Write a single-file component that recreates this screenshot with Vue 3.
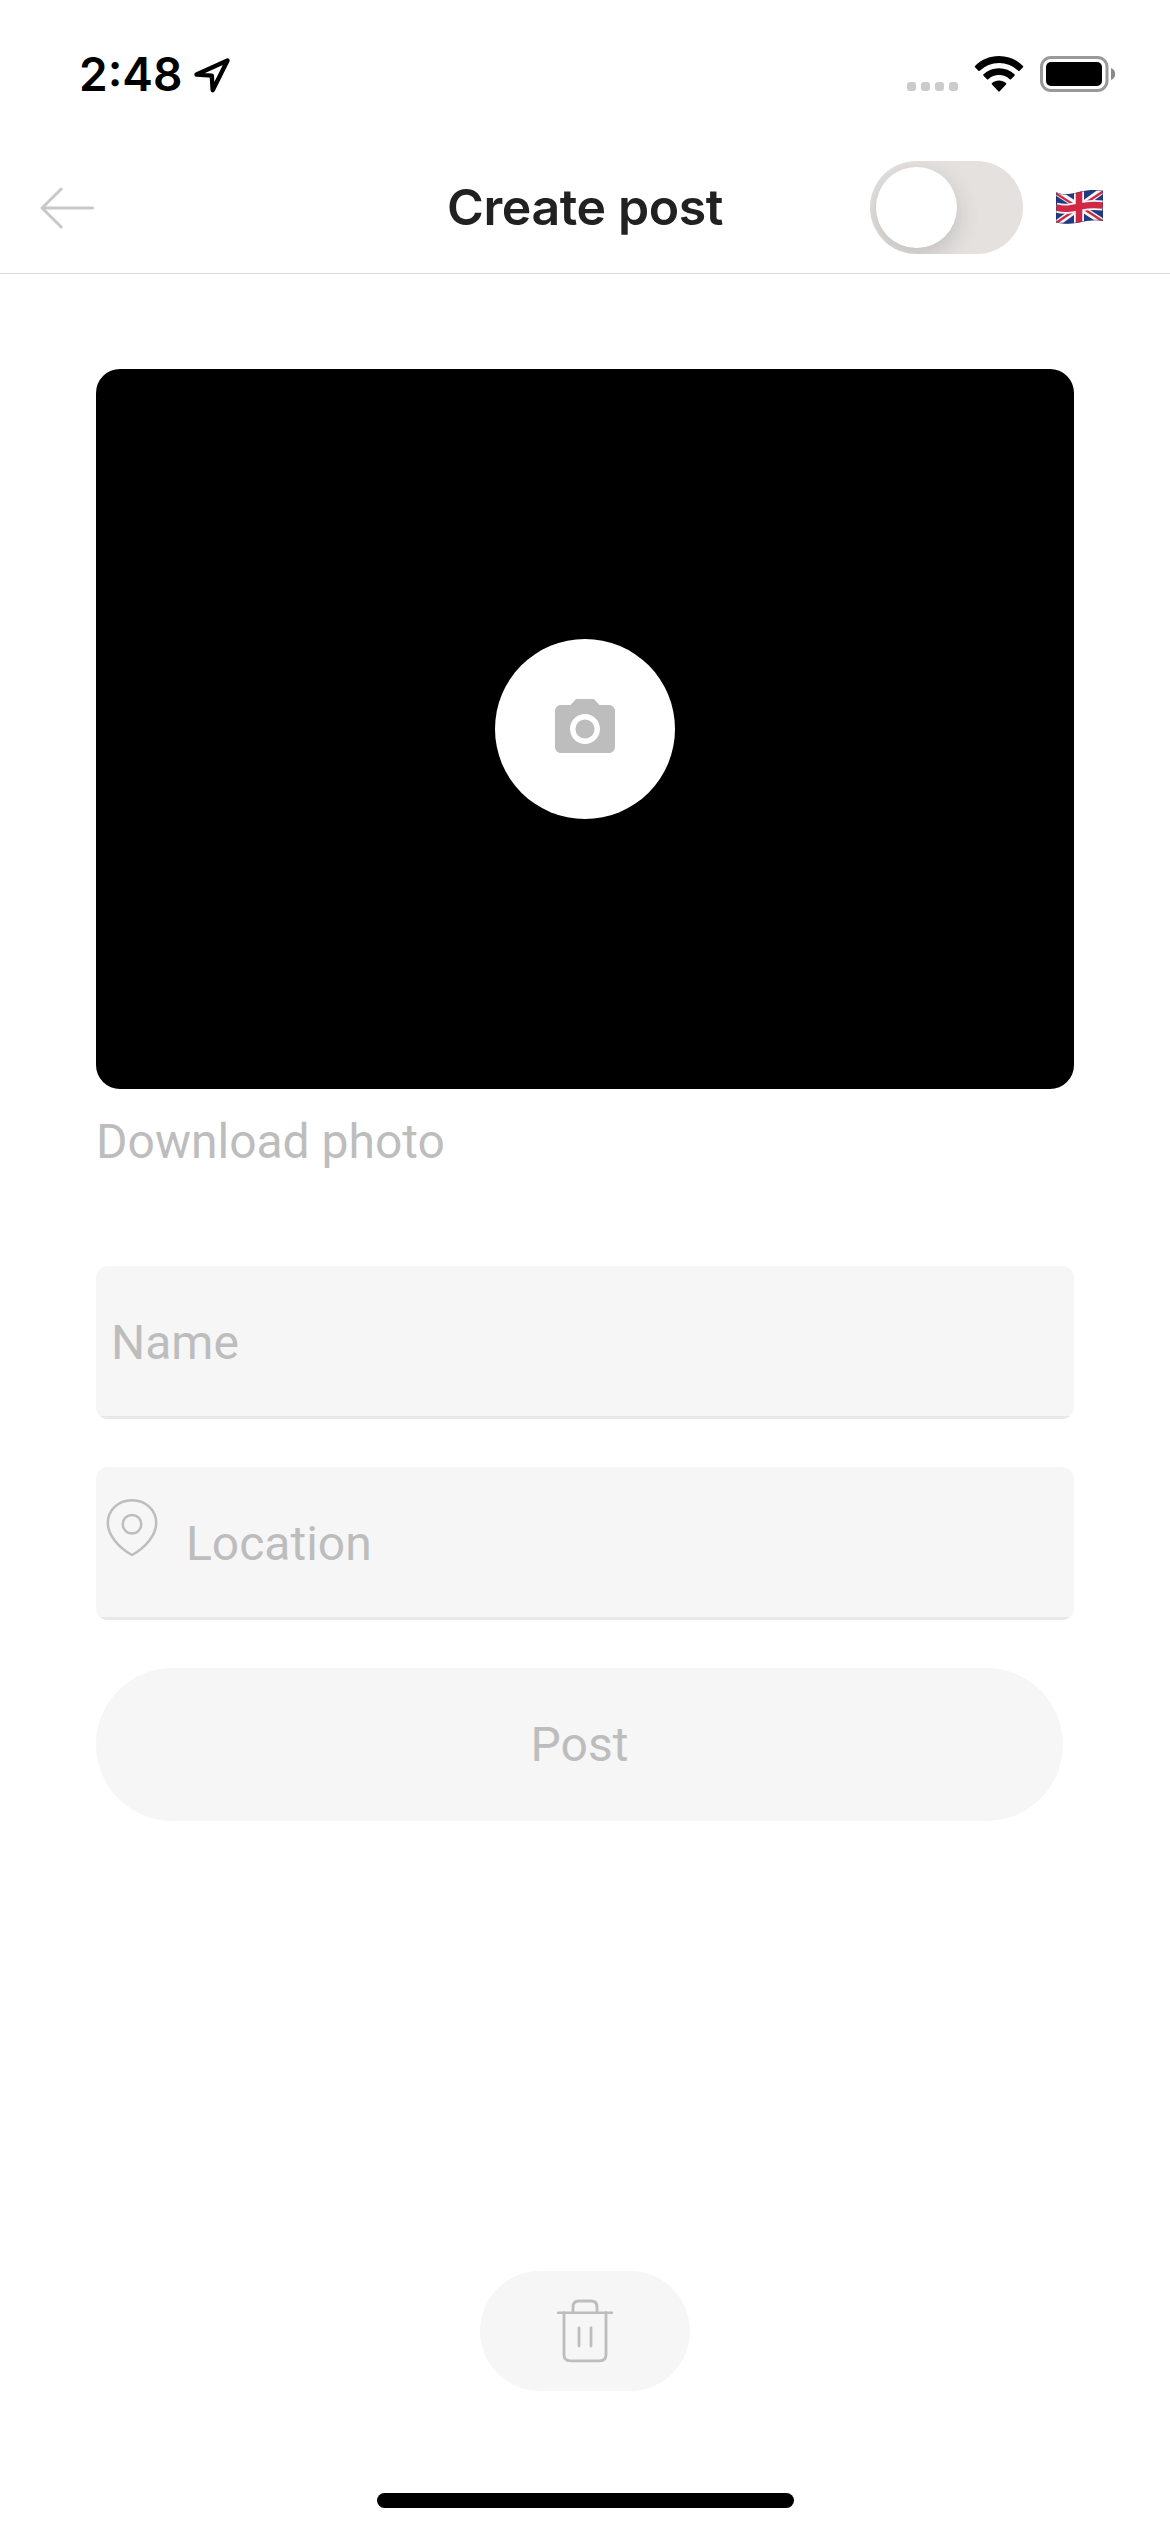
<script setup>
import { ref } from 'vue'

const english = ref(false)
const signalDots = [1, 2, 3, 4]
</script>

<template>
  <div class="screen">
    <div class="status-bar">
      <span class="time">2:48</span>
      <svg class="nav-arrow" width="40" height="38" viewBox="0 0 40 38">
        <path d="M35.500 4.500 L4.500 18.600 L19.800 19.600 L20.700 34.200 Z" fill="none" stroke="#000" stroke-width="4.400" stroke-linejoin="round" />
      </svg>
      <div class="signal">
        <i v-for="dot in signalDots" :key="dot"></i>
      </div>
      <svg class="wifi" width="50" height="38" viewBox="0 0 50 38">
        <path d="M25 1 C34.5 1 43 4.800 49 10.900 a.9.9 0 0 1 0 1.300 L45.600 15.700 a.9.9 0 0 1-1.300 0 A28 28 0 0 0 5.700 15.700 a.9.9 0 0 1-1.300 0 L1 12.200 a.9.9 0 0 1 0-1.300 C7 4.800 15.500 1 25 1Z" />
        <path d="M25 13.300 C31 13.300 36.400 15.500 40.500 19.300 a1 1 0 0 1 0 1.400 L37 24.200 a1 1 0 0 1-1.300 0 A16 16 0 0 0 14.300 24.200 a1 1 0 0 1-1.300 0 L9.500 20.700 a1 1 0 0 1 0-1.400 C13.600 15.500 19 13.300 25 13.300Z" />
        <path d="M25 25.600 C27.700 25.600 30.100 26.500 32 28.100 a1 1 0 0 1 0 1.500 L25.700 36.300 a1 1 0 0 1-1.400 0 L18 29.600 a1 1 0 0 1 0-1.500 C19.900 26.500 22.300 25.600 25 25.600Z" />
      </svg>
      <svg class="battery" width="76" height="36" viewBox="0 0 76 36">
        <rect x="1.500" y="1.500" width="65.500" height="33" rx="9.500" fill="none" stroke="#999" stroke-width="3" />
        <rect x="6" y="6" width="56" height="24" rx="5" />
        <path d="M71 12 C73.700 13 75.200 15.200 75.200 18 S73.700 23 71 24Z" fill="#8a8a8a" />
      </svg>
    </div>

    <header class="header">
      <button class="plain back" aria-label="Back">
        <svg width="54" height="42" viewBox="0 0 54 42">
          <path d="M52.500 21 H2 M21.200 2 L2 21 L21.200 40" fill="none" stroke="#c8c8c8" stroke-width="3" stroke-linecap="round" stroke-linejoin="round" />
        </svg>
      </button>
      <h1>Create post</h1>
      <button class="plain toggle" :class="{ on: english }" aria-label="Language" @click="english = !english">
        <span class="knob"></span>
      </button>
      <svg class="flag" width="47" height="34" viewBox="0 0 47 34">
        <defs>
          <clipPath id="wave">
            <path d="M0 2 C8 6 15 4 24 1.800 C33 -.4 40 -.2 47 .5 V31 C39 29.500 32 30.500 24 32.300 C15 34.300 8 34 0 32.500Z" />
          </clipPath>
        </defs>
        <g clip-path="url(#wave)">
          <rect width="47" height="34" fill="#203b82" />
          <path d="M0 2 L47 32 M0 34 L47 0" stroke="#f5f5f7" stroke-width="6.500" />
          <path d="M0 3.500 L22 17.500 M25 17 L47 31.500 M0 33 L22 18 M25 16 L47 1.500" stroke="#cf2845" stroke-width="2.300" />
          <path d="M23 0 V34" stroke="#f5f5f7" stroke-width="10" />
          <path d="M0 17.500 C9 20 15 18.500 24 16.500 C33 14.500 39 14.500 47 15.500" fill="none" stroke="#f5f5f7" stroke-width="10" />
          <path d="M23 0 V34" stroke="#cf2845" stroke-width="6.500" />
          <path d="M0 17.500 C9 20 15 18.500 24 16.500 C33 14.500 39 14.500 47 15.500" fill="none" stroke="#cf2845" stroke-width="6.500" />
          <path d="M0 2 C8 6 15 4 24 1.800 C33 -.4 40 -.2 47 .5 V31 C39 29.500 32 30.500 24 32.300 C15 34.300 8 34 0 32.500Z" fill="none" stroke="#203050" stroke-opacity=".45" stroke-width="1.500" />
        </g>
      </svg>
    </header>

    <main class="content">
      <div class="photo">
        <button class="plain camera" aria-label="Add photo">
          <svg width="72" height="72" viewBox="0 0 24 24" fill="#bdbdbd">
            <circle cx="12" cy="12" r="3.200" />
            <path d="M9 2 7.170 4H4c-1.100 0-2 .9-2 2v12c0 1.100.9 2 2 2h16c1.100 0 2-.9 2-2V6c0-1.100-.9-2-2-2h-3.170L15 2H9zm3 15c-2.760 0-5-2.240-5-5s2.240-5 5-5 5 2.240 5 5-2.240 5-5 5z" />
          </svg>
        </button>
      </div>
      <p class="caption">Download photo</p>

      <div class="field">
        <span>Name</span>
      </div>
      <div class="field location">
        <svg width="54" height="60" viewBox="0 0 54 60" fill="none" stroke="#bdbdbd" stroke-width="2.500">
          <path d="M27 2.200 C41 2.200 51.200 12.500 51.200 25 C51.200 37 40.500 49.500 27 57 C13.500 49.500 2.800 37 2.800 25 C2.800 12.500 13 2.200 27 2.200Z" stroke-linejoin="round" />
          <circle cx="27" cy="26.300" r="9.300" />
        </svg>
        <span>Location</span>
      </div>
      <button class="plain post">Post</button>
    </main>

    <button class="plain trash" aria-label="Delete">
      <svg width="58" height="66" viewBox="0 0 58 66" fill="none" stroke="#bdbdbd" stroke-width="2.800" stroke-linecap="round">
        <path d="M2 15.700 H56" stroke-width="2.400" />
        <path d="M17 15.700 V10 Q17 4 23 4 H35 Q41 4 41 10 V15.700" />
        <path d="M8 15.700 V57.500 Q8 63.800 14.300 63.800 H43.700 Q50 63.800 50 57.500 V15.700" />
        <path d="M23 31 V49 M35 31 V49" />
      </svg>
    </button>
    <div class="home-indicator"></div>
  </div>
</template>

<style>
body {
  margin: 0;
  background: #fff;
}
</style>

<style scoped>
.screen {
  width: 1170px;
  height: 2532px;
  display: flex;
  flex-direction: column;
  background: #fff;
  color: #bdbdbd;
  font-family: Roboto, sans-serif;
  font-size: 48px;
  overflow: hidden;
}
.plain {
  border: 0;
  padding: 0;
  font: inherit;
  color: inherit;
  background: none;
}
svg {
  display: block;
  flex: none;
}

.status-bar {
  box-sizing: border-box;
  height: 141px;
  padding: 7px 54px 0 79px;
  display: flex;
  align-items: center;
  color: #000;
}
.time {
  width: 113px;
  font: 600 46px/56px Inter, sans-serif;
  white-space: nowrap;
}
.nav-arrow {
  margin-top: 1px;
}
.signal {
  display: flex;
  gap: 5px;
  margin: 24px 16px 0 auto;
}
.signal i {
  width: 9px;
  height: 9px;
  border-radius: 3px;
  background: #cbcbcb;
}
.wifi {
  margin-right: 16px;
}

.header {
  box-sizing: border-box;
  height: 133px;
  padding: 0 67px 0 40px;
  display: flex;
  align-items: center;
  border-bottom: 1px solid #dcdcdc;
}
.back {
  margin-top: 1px;
}
h1 {
  margin: 0 0 0 353px;
  width: 423px;
  color: #212121;
  font: 600 50px/60px Inter, sans-serif;
  letter-spacing: -0.4px;
  white-space: nowrap;
}
.toggle {
  width: 153px;
  height: 93px;
  flex: none;
  display: flex;
  align-items: center;
  padding: 0 6px;
  border-radius: 47px;
  background: #e5e1df;
  overflow: hidden;
}
.toggle.on {
  justify-content: flex-end;
}
.knob {
  width: 81px;
  height: 81px;
  border-radius: 50%;
  background: #fff;
  box-shadow: 0 8px 24px rgba(0, 0, 0, 0.16);
}
.flag {
  margin-left: 33px;
}

.content {
  flex: 1;
  padding: 95px 96px 0;
}
.photo {
  height: 720px;
  display: flex;
  align-items: center;
  justify-content: center;
  border-radius: 24px;
  background: #000;
}
.camera {
  width: 180px;
  height: 180px;
  display: flex;
  align-items: center;
  justify-content: center;
  border-radius: 50%;
  background: #fff;
}
.caption {
  margin: 24px 0 96px;
  line-height: 57px;
}
.field {
  height: 153px;
  margin-bottom: 48px;
  padding-left: 15px;
  display: flex;
  line-height: 153px;
  border-radius: 12px;
  background: linear-gradient(#e8e8e8, #e8e8e8) bottom / 100% 3px no-repeat #f6f6f6;
}
.location {
  padding-left: 9px;
  gap: 27px;
}
.location svg {
  margin-top: 31px;
}
.post {
  width: 967px;
  height: 153px;
  line-height: 153px;
  border-radius: 77px;
  background: #f6f6f6;
}
.trash {
  width: 210px;
  height: 120px;
  display: flex;
  align-items: center;
  justify-content: center;
  align-self: center;
  border-radius: 60px;
  background: #f6f6f6;
}
.trash svg {
  margin-top: -2px;
}
.home-indicator {
  width: 417px;
  height: 15px;
  margin: 102px 0 24px 377px;
  border-radius: 8px;
  background: #000;
}
</style>
